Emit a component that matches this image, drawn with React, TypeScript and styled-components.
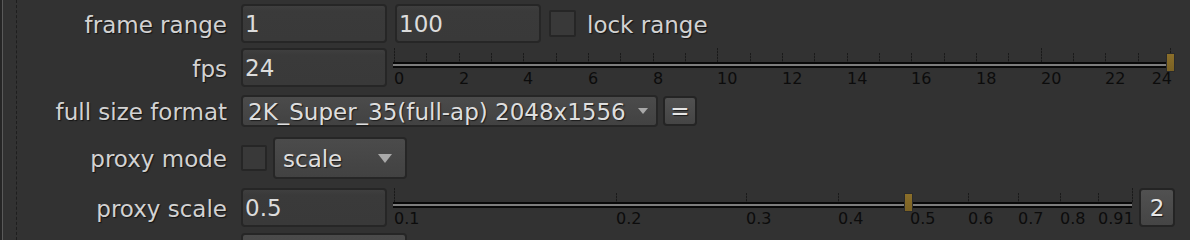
import styled, { createGlobalStyle } from "styled-components";

const GlobalStyle = createGlobalStyle`
  html, body {
    margin: 0;
    padding: 0;
    background: #323232;
  }
  body {
    font-family: "DejaVu Sans", Verdana, sans-serif;
  }
`;

const Panel = styled.div`
  display: flex;
  width: 1190px;
  height: 240px;
  overflow: hidden;
  background: #323232;
`;

const Edge = styled.div`
  width: 1px;
  flex-shrink: 0;
  background: #5a5a5a;
  border-left: 2px solid #262626;
`;

const Gutter = styled.div`
  width: 13px;
  flex-shrink: 0;
  border-right: 1px dashed #1e1e1e;
`;

const Form = styled.div`
  display: flex;
  flex-direction: column;
`;

const Row = styled.div<{ $h: number; $mt: number }>`
  display: flex;
  align-items: center;
  height: ${(p) => p.$h}px;
  margin-top: ${(p) => p.$mt}px;
  flex-shrink: 0;
`;

const Label = styled.div`
  width: 210px;
  margin-right: 14px;
  padding-top: 2px;
  text-align: right;
  font-size: 23px;
  color: #d2d2d2;
  text-shadow: 1px 1px 1px #141414;
  white-space: nowrap;
  flex-shrink: 0;
`;

const Inline = styled.span`
  margin-left: 11px;
  padding-top: 2px;
  font-size: 23px;
  color: #d2d2d2;
  text-shadow: 1px 1px 1px #141414;
  white-space: nowrap;
`;

const Field = styled.div<{ $ml?: number }>`
  box-sizing: border-box;
  width: 146px;
  height: 39px;
  margin-left: ${(p) => p.$ml ?? 0}px;
  padding: 2px 0 0 2px;
  border: 2px solid #262626;
  border-radius: 4px;
  background: linear-gradient(#3f3f3f 0, #3a3a3a 5px, #393939 100%);
  font-size: 23px;
  line-height: 33px;
  color: #dcdcdc;
  flex-shrink: 0;
`;

const Check = styled.div<{ $size: number; $ml?: number }>`
  box-sizing: border-box;
  width: ${(p) => p.$size}px;
  height: ${(p) => p.$size}px;
  margin-left: ${(p) => p.$ml ?? 0}px;
  border: 2px solid #262626;
  border-radius: 2px;
  background: #393939;
  flex-shrink: 0;
`;

const Dropdown = styled.div<{ $w: number; $h: number; $ml?: number; $pl: number }>`
  box-sizing: border-box;
  display: flex;
  align-items: center;
  justify-content: space-between;
  width: ${(p) => p.$w}px;
  height: ${(p) => p.$h}px;
  margin-left: ${(p) => p.$ml ?? 0}px;
  padding-left: ${(p) => p.$pl}px;
  border: 2px solid #262626;
  border-radius: 4px;
  background: linear-gradient(#4b4b4b, #424242);
  font-size: 23px;
  color: #dedede;
  text-shadow: 1px 1px 1px #1c1c1c;
  white-space: nowrap;
  flex-shrink: 0;
  align-self: flex-start;
`;

const DropText = styled.span`
  padding-top: 2px;
`;

const Arrow = styled.span<{ $w: number; $h: number; $mr: number }>`
  width: 0;
  height: 0;
  margin-right: ${(p) => p.$mr}px;
  border-left: ${(p) => p.$w / 2}px solid transparent;
  border-right: ${(p) => p.$w / 2}px solid transparent;
  border-top: ${(p) => p.$h}px solid #a9a9a9;
`;

const SmallButton = styled.div<{ $w: number; $h: number; $ml: number }>`
  box-sizing: border-box;
  display: flex;
  align-items: center;
  justify-content: center;
  width: ${(p) => p.$w}px;
  height: ${(p) => p.$h}px;
  margin-left: ${(p) => p.$ml}px;
  border: 2px solid #242424;
  border-radius: 4px;
  background: linear-gradient(#515151, #454545);
  font-size: 23px;
  color: #e6e6e6;
  text-shadow: 1px 1px 1px #1c1c1c;
  flex-shrink: 0;
`;

const SliderBox = styled.div<{ $w: number }>`
  position: relative;
  width: ${(p) => p.$w}px;
  height: 39px;
  margin-left: 7px;
  flex-shrink: 0;
`;

const Track = styled.div`
  position: absolute;
  left: -1px;
  right: 0;
  top: 14px;
  height: 6px;
  box-sizing: border-box;
  border-top: 2px solid #080808;
  border-bottom: 2px solid #080808;
  background: #7e7e7e;
`;

const Tick = styled.div<{ $tall: boolean }>`
  position: absolute;
  top: ${(p) => (p.$tall ? 0 : 5)}px;
  width: 1px;
  height: ${(p) => (p.$tall ? 15 : 10)}px;
  background: repeating-linear-gradient(#1a1a1a 0 2px, #2a2a2a 2px 3px);
`;

const TickLabel = styled.span<{ $end: boolean }>`
  position: absolute;
  top: 23px;
  font-size: 16px;
  line-height: 16px;
  color: #0c0c0c;
  white-space: nowrap;
  transform: ${(p) => (p.$end ? "translateX(calc(-100% + 2px))" : "none")};
`;

const Knob = styled.div`
  position: absolute;
  top: 5px;
  width: 9px;
  height: 19px;
  margin-left: -4px;
  box-sizing: border-box;
  border: 1px solid #2b2b2b;
  background: linear-gradient(#8b6f2a, #7a6124);
`;

type Mark = { v: number; tall: boolean };

type SliderProps = {
  width: number;
  pos: (v: number) => number;
  ticks: Mark[];
  labels: { v: number; text: string }[];
  value: number;
};

const Slider = ({ width, pos, ticks, labels, value }: SliderProps) => (
  <SliderBox $w={width}>
    {ticks.map((t) => (
      <Tick key={t.v} $tall={t.tall} style={{ left: Math.round(pos(t.v)) }} />
    ))}
    <Track />
    {labels.map((l, i) => (
      <TickLabel
        key={l.text}
        $end={i === labels.length - 1}
        style={{ left: Math.round(pos(l.v)) }}
      >
        {l.text}
      </TickLabel>
    ))}
    <Knob style={{ left: Math.round(pos(value)) }} />
  </SliderBox>
);

const fpsWidth = 776;
const fpsPos = (v: number) => (v / 24) * fpsWidth;
const fpsTicks: Mark[] = Array.from({ length: 25 }, (_, v) => ({
  v,
  tall: v % 10 === 0 || v === 24,
}));
const fpsLabels = Array.from({ length: 13 }, (_, i) => ({
  v: i * 2,
  text: String(i * 2),
}));

const proxyWidth = 738;
const proxyPos = (v: number) => (Math.log10(v) + 1) * proxyWidth;
const proxyValues = [0.1, 0.2, 0.3, 0.4, 0.5, 0.6, 0.7, 0.8, 0.9, 1];
const proxyTicks: Mark[] = proxyValues.map((v) => ({
  v,
  tall: v === 0.1 || v === 1,
}));
const proxyLabels = proxyValues.map((v) => ({ v, text: String(v) }));

const App = () => {
  return (
    <>
      <GlobalStyle />
      <Panel>
        <Edge />
        <Gutter />
        <Form>
          <Row $h={39} $mt={4}>
            <Label>frame range</Label>
            <Field>1</Field>
            <Field $ml={8}>100</Field>
            <Check $size={27} $ml={8} />
            <Inline>lock range</Inline>
          </Row>
          <Row $h={39} $mt={5}>
            <Label>fps</Label>
            <Field>24</Field>
            <Slider
              width={fpsWidth}
              pos={fpsPos}
              ticks={fpsTicks}
              labels={fpsLabels}
              value={24}
            />
          </Row>
          <Row $h={32} $mt={8}>
            <Label>full size format</Label>
            <Dropdown $w={417} $h={32} $pl={5}>
              <DropText>2K_Super_35(full-ap) 2048x1556</DropText>
              <Arrow $w={11} $h={6} $mr={8} />
            </Dropdown>
            <SmallButton $w={34} $h={30} $ml={5}>
              =
            </SmallButton>
          </Row>
          <Row $h={42} $mt={10}>
            <Label>proxy mode</Label>
            <Check $size={26} />
            <Dropdown $w={134} $h={42} $ml={6} $pl={8}>
              <DropText>scale</DropText>
              <Arrow $w={15} $h={9} $mr={13} />
            </Dropdown>
          </Row>
          <Row $h={39} $mt={9}>
            <Label>proxy scale</Label>
            <Field>0.5</Field>
            <Slider
              width={proxyWidth}
              pos={proxyPos}
              ticks={proxyTicks}
              labels={proxyLabels}
              value={0.497}
            />
            <SmallButton $w={36} $h={39} $ml={7}>
              2
            </SmallButton>
          </Row>
          <Row $h={40} $mt={6}>
            <Label />
            <Dropdown $w={166} $h={40} $pl={8} />
          </Row>
        </Form>
      </Panel>
    </>
  );
};

export default App;
